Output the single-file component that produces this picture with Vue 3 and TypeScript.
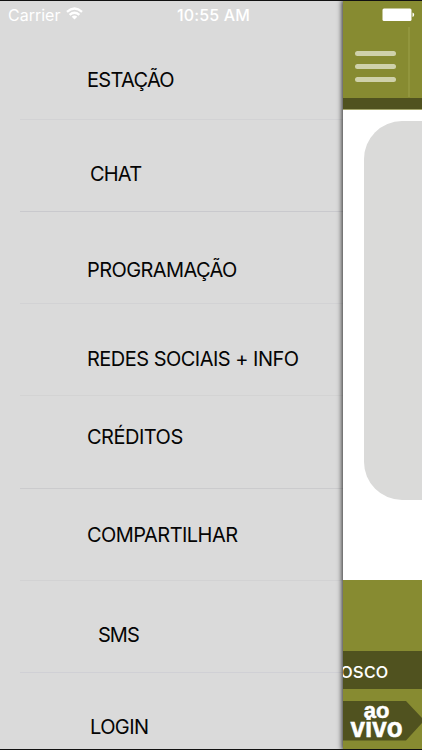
<script setup lang="ts">
interface MenuItem {
  label: string
  top: number
  left: number
  height: number
  spacing: number
  line: string
}

const items: MenuItem[] = [
  { label: 'ESTAÇÃO', top: 40, left: 87, height: 92, spacing: -0.7, line: '#d2d2d4' },
  { label: 'CHAT', top: 42, left: 90, height: 92, spacing: -0.8, line: '#c9c9cd' },
  { label: 'PROGRAMAÇÃO', top: 46, left: 87, height: 92, spacing: -0.6, line: '#d2d2d4' },
  { label: 'REDES SOCIAIS + INFO', top: 43, left: 87, height: 92, spacing: -0.52, line: '#d3d3d3' },
  { label: 'CRÉDITOS', top: 29, left: 87, height: 93, spacing: -0.5, line: '#cbcbcd' },
  { label: 'COMPARTILHAR', top: 34, left: 87, height: 92, spacing: -0.55, line: '#d2d2d3' },
  { label: 'SMS', top: 42, left: 98, height: 92, spacing: -1, line: '#d0d0d5' },
  { label: 'LOGIN', top: 42, left: 90, height: 75, spacing: -0.6, line: 'transparent' },
]
</script>

<template>
  <div class="screen">
    <nav class="drawer">
      <ul class="menu">
        <li
          v-for="item in items"
          :key="item.label"
          class="row"
          :style="{ height: item.height + 'px', paddingTop: item.top + 'px', paddingLeft: item.left - 20 + 'px', borderColor: item.line }"
        >
          <span class="label" :style="{ letterSpacing: item.spacing + 'px' }">{{ item.label }}</span>
        </li>
      </ul>
    </nav>

    <main class="page">
      <header class="topbar">
        <button class="burger" aria-label="Menu"><i /><i /><i /></button>
        <span class="separator" />
      </header>
      <div class="strip" />
      <section class="content"><div class="card" /></section>
      <section class="player" />
      <div class="ticker">osco</div>
      <footer class="bottom">
        <svg class="tag" width="80" height="40" viewBox="0 0 80 40">
          <path d="M0 0H63L79 17V22L63 39.5H0Z" fill="#50521f" />
        </svg>
        <div class="live"><span class="ao">ao</span><span class="vivo">vivo</span></div>
      </footer>
    </main>

    <div class="status">
      <div class="carrier">
        <span>Carrier</span>
        <svg width="17" height="13" viewBox="0 0 17 13" fill="none" stroke="#fff" stroke-width="2.3">
          <path d="M1 4.9Q8.5 -1.8 16 4.9" />
          <path d="M3.6 7.8Q8.5 3.6 13.4 7.8" />
          <path d="M5.7 9.7Q8.5 7.4 11.3 9.7L8.5 12.5Z" fill="#fff" stroke="none" />
        </svg>
      </div>
      <span class="clock">10:55 AM</span>
      <svg class="battery" width="33" height="14" viewBox="0 0 33 14">
        <rect x="0.5" y="0.5" width="29" height="12.5" rx="1.5" fill="#fff" />
        <path d="M30.5 4.5Q32.2 5 32.2 6.7T30.5 9Z" fill="#fff" />
      </svg>
    </div>
  </div>
</template>

<style>
body {
  margin: 0;
}
</style>

<style scoped>
.screen {
  position: relative;
  display: flex;
  box-sizing: border-box;
  width: 422px;
  height: 750px;
  overflow: hidden;
  border-top: 1px solid #111;
  border-bottom: 1px solid #111;
  background: #dadada;
  font-family: Inter, 'Liberation Sans', sans-serif;
}
.drawer {
  box-sizing: border-box;
  width: 343px;
  flex: none;
  padding: 27px 0 0 20px;
  background: #dadada;
}
.menu {
  margin: 0;
  padding: 0;
  list-style: none;
}
.row {
  box-sizing: border-box;
  border-bottom: 1px solid;
}
.label {
  display: block;
  width: max-content;
  font-size: 20px;
  line-height: 24px;
  color: #050505;
}
.page {
  display: flex;
  flex-direction: column;
  flex: none;
  width: 79px;
  background: #878b31;
  box-shadow: 0 0 5px 1px rgba(0, 0, 0, 0.8);
}
.topbar {
  display: flex;
  height: 97px;
  flex: none;
}
.burger {
  display: flex;
  flex-direction: column;
  gap: 8px;
  width: 65px;
  padding: 50px 0 0 12px;
  box-sizing: border-box;
  border: 0;
  background: none;
}
.burger i {
  width: 41px;
  height: 5px;
  border-radius: 3px;
  background: #cfd1aa;
}
.separator {
  width: 2px;
  height: 70px;
  margin-top: 26px;
  background: #92963d;
}
.strip {
  height: 11px;
  flex: none;
  background: #50521f;
  border-bottom: 1px solid #a3a56b;
}
.content {
  box-sizing: border-box;
  height: 470px;
  flex: none;
  padding: 11px 0 0 21px;
  overflow: hidden;
  background: #fff;
}
.card {
  width: 160px;
  height: 379px;
  border-radius: 38px;
  background: #dadad9;
}
.player {
  height: 71px;
  flex: none;
}
.ticker {
  height: 38px;
  flex: none;
  overflow: hidden;
  background: #50521f;
  color: #fff;
  font-size: 21.5px;
  line-height: 39px;
  text-indent: -3px;
  letter-spacing: -0.3px;
}
.bottom {
  display: grid;
  padding-top: 12px;
}
.tag {
  display: block;
  grid-area: 1 / 1;
}
.live {
  grid-area: 1 / 1;
  display: flex;
  flex-direction: column;
  align-items: center;
  width: 67px;
  height: 40px;
  padding-top: 1px;
  box-sizing: border-box;
  color: #fff;
  font-family: 'Liberation Sans', sans-serif;
  font-weight: 700;
  -webkit-text-stroke: 0.5px #fff;
}
.ao {
  font-size: 22px;
  line-height: 17px;
  transform: scaleY(1.04);
}
.vivo {
  font-size: 26px;
  line-height: 16px;
  transform: scaleY(1.06);
}
.status {
  position: absolute;
  inset: 0 0 auto;
  display: flex;
  justify-content: space-between;
  align-items: flex-start;
  padding: 6px 7px 0 8px;
  color: #fff;
  font-size: 16px;
  line-height: 16px;
}
.carrier {
  display: flex;
  gap: 6px;
  width: 169px;
}
.clock {
  flex: 1;
  font-weight: 500;
  letter-spacing: 0.15px;
}
.battery {
  margin-top: 1px;
}
</style>
